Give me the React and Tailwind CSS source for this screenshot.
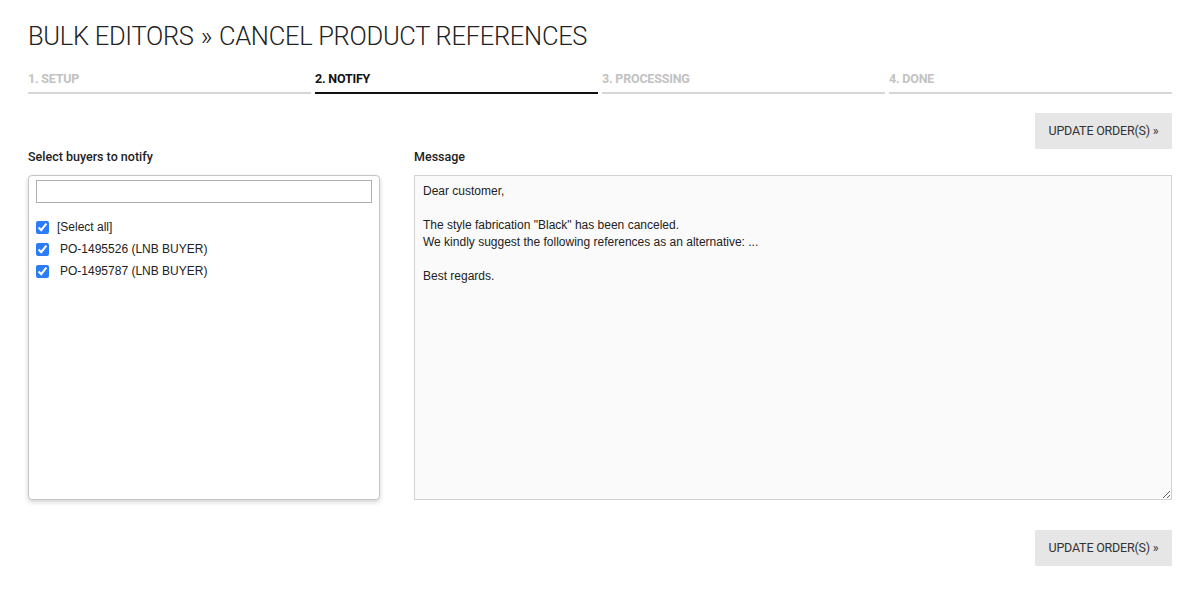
import { useState } from "react";

const steps = [
  { label: "1. SETUP", active: false },
  { label: "2. NOTIFY", active: true },
  { label: "3. PROCESSING", active: false },
  { label: "4. DONE", active: false },
];

const buyers = [
  { id: "all", label: "[Select all]" },
  { id: "PO-1495526", label: "PO-1495526 (LNB BUYER)" },
  { id: "PO-1495787", label: "PO-1495787 (LNB BUYER)" },
];

const defaultMessage = `Dear customer,

The style fabrication "Black" has been canceled.
We kindly suggest the following references as an alternative: ...

Best regards.`;

const UpdateButton = () => (
  <button className="h-[36px] w-[137px] bg-[#e6e6e6] text-[12.5px] text-[#333] font-[Roboto,sans-serif] tracking-[-0.2px]">
    UPDATE ORDER(S) »
  </button>
);

export default function App() {
  const [checked, setChecked] = useState({
    all: true,
    "PO-1495526": true,
    "PO-1495787": true,
  });

  return (
    <div className="min-h-[600px] bg-white px-[28px] pt-[21px] font-[Roboto,sans-serif] text-[#222]">
      {/* Title */}
      <h1 className="text-[25.5px] font-light leading-[30px] tracking-[-0.3px] text-[#222]">
        BULK EDITORS<span className="mx-[7px]">»</span>CANCEL PRODUCT REFERENCES
      </h1>

      {/* Steps */}
      <div className="mt-[19px] grid grid-cols-4 gap-[4px]">
        {steps.map((step) => (
          <div
            key={step.label}
            className={`pb-[4px] border-b-2 ${
              step.active ? "border-[#111]" : "border-[#d6d6d6]"
            }`}
          >
            <span
              className={`block text-[12.5px] font-bold leading-[18px] tracking-[-0.2px] ${
                step.active ? "text-[#111]" : "text-[#c2c2c2]"
              }`}
            >
              {step.label}
            </span>
          </div>
        ))}
      </div>

      <div className="mt-[19px] flex justify-end">
        <UpdateButton />
      </div>

      {/* Content */}
      <div className="flex gap-[34px]">
        <div className="w-[352px]">
          <div className="text-[12.5px] font-medium leading-[16px] text-[#222]">
            Select buyers to notify
          </div>
          <div className="mt-[10px] h-[325px] rounded-[4px] border border-[#c6c6c6] bg-white px-[7px] pt-[4px] shadow-[0_2px_5px_rgba(0,0,0,0.18)]">
            <input
              type="text"
              className="block h-[23px] w-full border border-[#aeaeae] bg-white px-[4px] text-[12px] outline-none"
            />
            <div className="mt-[13px] font-['Liberation_Sans',Arial,sans-serif] text-[12px] text-[#222]">
              {buyers.map((buyer, i) => (
                <label
                  key={buyer.id}
                  className="flex h-[22px] items-center"
                >
                  <input
                    type="checkbox"
                    checked={checked[buyer.id]}
                    onChange={(e) =>
                      setChecked({ ...checked, [buyer.id]: e.target.checked })
                    }
                    className="m-0 h-[13px] w-[13px] accent-[#2c7cf6]"
                  />
                  <span className={i === 0 ? "ml-[8px]" : "ml-[11px]"}>
                    {buyer.label}
                  </span>
                </label>
              ))}
            </div>
          </div>
        </div>

        <div className="flex-1">
          <div className="text-[12.5px] font-medium leading-[16px] text-[#222]">
            Message
          </div>
          <textarea
            defaultValue={defaultMessage}
            className="mt-[10px] block h-[325px] w-full border border-[#d2d2d2] bg-[#fafafa] px-[8px] pt-[7px] font-['Liberation_Sans',Arial,sans-serif] text-[12px] leading-[17px] text-[#222] outline-none"
          />
        </div>
      </div>

      <div className="mt-[30px] flex justify-end">
        <UpdateButton />
      </div>
    </div>
  );
}
